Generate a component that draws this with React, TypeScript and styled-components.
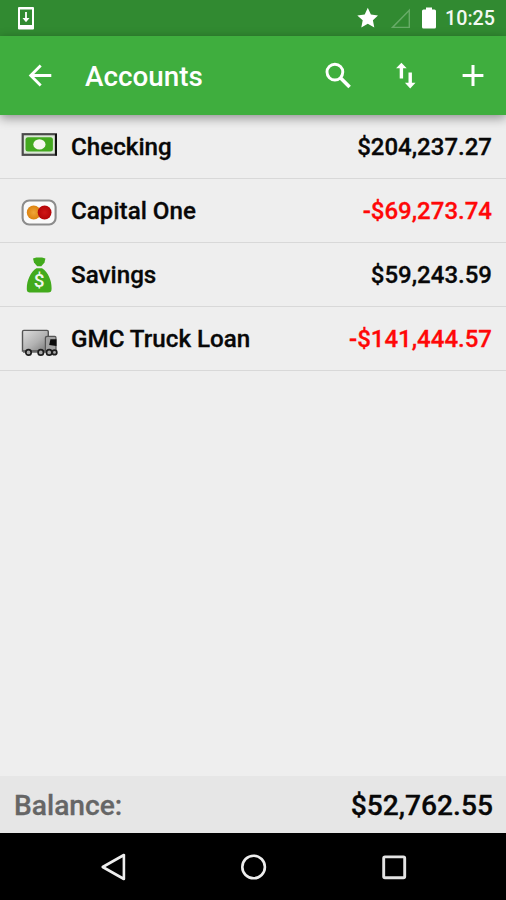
import React from 'react';
import styled, { createGlobalStyle } from 'styled-components';

const Global = createGlobalStyle`
  * { box-sizing: border-box; }
  body { margin: 0; background: #eee; font-family: Roboto, "Liberation Sans", sans-serif; }
  svg { display: block; flex: none; }
`;

const Screen = styled.div`
  width: 506px;
  height: 900px;
  display: flex;
  flex-direction: column;
  background: #eeeeee;
  overflow: hidden;
`;

const StatusBar = styled.div`
  height: 36px;
  flex: none;
  display: flex;
  align-items: center;
  justify-content: space-between;
  padding: 0 11px 0 17px;
  background: #318a31;
  color: #fff;
`;

const StatusIcons = styled.div`
  display: flex;
  align-items: center;
`;

const Clock = styled.span`
  margin-left: 9px;
  padding-top: 2px;
  font-size: 19.7px;
  line-height: 24px;
  font-weight: 500;
  color: #f3f9f3;
`;

const AppBar = styled.header`
  height: 79px;
  flex: none;
  display: flex;
  align-items: center;
  padding: 0 19px 0 26px;
  background: #3fae3e;
  color: #fff;
  box-shadow: 0 3px 10px rgba(0, 0, 0, 0.4);
  z-index: 1;
`;

const Title = styled.h1`
  margin: 0 0 0 31px;
  padding-top: 3px;
  flex: 1;
  font-size: 27.8px;
  line-height: 32px;
  font-weight: 500;
`;

const Actions = styled.div`
  display: flex;
  gap: 39px;
`;

const List = styled.ul`
  flex: 1;
  margin: 0;
  padding: 0;
  list-style: none;
`;

const Row = styled.li`
  height: 64px;
  display: flex;
  align-items: center;
  padding: 1px 14px 0 19px;
  border-bottom: 1px solid #d8d8d8;
`;

const Name = styled.span`
  flex: 1;
  margin-left: 12px;
  font-size: 24.2px;
  line-height: 28px;
  font-weight: 500;
  color: #080808;
  -webkit-text-stroke: 0.3px currentColor;
`;

const Amount = styled.span<{ $negative?: boolean }>`
  font-size: 24px;
  line-height: 28px;
  font-weight: 500;
  color: ${(p) => (p.$negative ? '#ff0808' : '#080808')};
  -webkit-text-stroke: 0.3px currentColor;
`;

const Footer = styled.footer`
  height: 57px;
  flex: none;
  display: flex;
  align-items: center;
  justify-content: space-between;
  padding: 3px 13px 0 14px;
  background: #e6e6e6;
  font-size: 28.2px;
  line-height: 32px;
  font-weight: 500;
  -webkit-text-stroke: 0.3px currentColor;
`;

const FooterLabel = styled.span`
  color: #666;
`;

const FooterTotal = styled.span`
  color: #080808;
`;

const NavBar = styled.nav`
  height: 67px;
  flex: none;
  display: flex;
  align-items: center;
  justify-content: center;
  gap: 100px;
  background: #000;
`;

const BillIcon = () => (
  <svg width="40" height="40" viewBox="0 0 40 40">
    <rect x="3.7" y="7.2" width="33.2" height="20.6" fill="#dce8d8" stroke="#4a4a4a" strokeWidth="2.2" />
    <path d="M37 7V28.5" fill="none" stroke="#111" strokeWidth="2" />
    <rect x="6.5" y="10.2" width="27.4" height="14.4" rx="2.5" fill="#43a91f" />
    <ellipse cx="20.4" cy="17.4" rx="6.1" ry="5.2" fill="#f6f6ee" />
  </svg>
);

const CardIcon = () => (
  <svg width="40" height="40" viewBox="0 0 40 40">
    <defs>
      <radialGradient id="orange">
        <stop offset="0" stopColor="#f0a638" />
        <stop offset="1" stopColor="#dc820f" />
      </radialGradient>
      <radialGradient id="crimson">
        <stop offset="0" stopColor="#cf1616" />
        <stop offset="1" stopColor="#b40508" />
      </radialGradient>
    </defs>
    <rect x="3.6" y="9.5" width="33" height="24" rx="6.5" fill="#fafafa" stroke="#8c8c8c" strokeWidth="2.1" />
    <circle cx="14.7" cy="21.5" r="6.9" fill="url(#orange)" />
    <circle cx="25.6" cy="21.5" r="6.9" fill="url(#crimson)" />
  </svg>
);

const Sack = styled.text`
  font: 500 19px Roboto, sans-serif;
  fill: #f1f7ed;
  text-anchor: middle;
`;

const BagIcon = () => (
  <svg width="40" height="40" viewBox="0 0 40 40">
    <path d="M14 3.4L17.3 2.5H23L26.4 3.4L25.5 7.4L22.3 11.3H18.2L15 7.4Z" fill="#42aa1c" />
    <path d="M17.4 13.2H23C28.9 17 32.8 25 32.6 33.5C32.6 36.5 31.6 37.5 29 37.5H11.5C8.6 37.5 7.8 36.5 7.8 33.5C7.8 25 11.7 17 17.4 13.2Z" fill="#42aa1c" />
    <Sack x="20.2" y="31.6">$</Sack>
  </svg>
);

const TruckIcon = () => (
  <svg width="40" height="40" viewBox="0 0 40 40">
    <defs>
      <linearGradient id="cargo" x1="0" y1="0" x2="1" y2="1">
        <stop offset="0" stopColor="#dedede" />
        <stop offset="0.55" stopColor="#b2b2b2" />
        <stop offset="1" stopColor="#777" />
      </linearGradient>
    </defs>
    <path d="M3.5 32V12.7Q3.5 11.4 4.8 11.4H28Q29.3 11.4 29.3 12.7V32Z" fill="url(#cargo)" stroke="#555" strokeWidth="1.4" />
    <path d="M26.4 32.5V19Q26.4 17.3 28.5 17.3H35.8Q37 17.3 37 18.8V32.5Z" fill="#a2a2a2" stroke="#555" strokeWidth="1.2" />
    <path d="M37.5 20.2H31.4L30.2 26L37.5 27Z" fill="#0b0b0b" />
    <path d="M4 32.8H37" stroke="#666" strokeWidth="2" />
    {[9.5, 21.8, 30.2, 35.5].map((x) => (
      <circle key={x} cx={x} cy="33.4" r={x > 35 ? 2.3 : 2.7} fill="#aaa" stroke="#1d1d1d" strokeWidth="1.7" />
    ))}
  </svg>
);

const accounts = [
  { name: 'Checking', amount: '$204,237.27', Icon: BillIcon },
  { name: 'Capital One', amount: '-$69,273.74', negative: true, Icon: CardIcon },
  { name: 'Savings', amount: '$59,243.59', Icon: BagIcon },
  { name: 'GMC Truck Loan', amount: '-$141,444.57', negative: true, Icon: TruckIcon },
];

export default function App() {
  return (
    <>
      <Global />
      <Screen>
        <StatusBar>
          <svg width="18" height="24" viewBox="0 0 18 24">
            <path fillRule="evenodd" fill="#fff" d="M2 1H16Q17 1 17 2V22.5Q17 23.5 16 23.5H2Q1 23.5 1 22.5V2Q1 1 2 1ZM3 3.5V19H15V3.5Z" />
            <path d="M9 6V14" stroke="#fff" strokeWidth="1.8" />
            <path d="M5.5 12H12.5L9 16.3Z" fill="#fff" />
          </svg>
          <StatusIcons>
            <svg width="22" height="22" viewBox="0 0 22 22">
              <path fill="#fff" d="M11.8 .8L14.9 7.4L22 8.4L16.9 13.2L18.3 20.5L11.8 16.8L5.3 20.5L6.7 13.2L1.3 8.4L8.7 7.4Z" />
            </svg>
            <svg width="44" height="24" viewBox="0 0 44 24">
              <path d="M14.5 21.4H31.3V4.3Z" fill="none" stroke="#67ab67" strokeWidth="1.4" />
            </svg>
            <svg width="14" height="22" viewBox="0 0 14 22">
              <path fill="#fff" d="M4 .5H10V2.5H12.5Q14 2.5 14 4V20Q14 21.5 12.5 21.5H1.5Q0 21.5 0 20V4Q0 2.5 1.5 2.5H4Z" />
            </svg>
            <Clock>10:25</Clock>
          </StatusIcons>
        </StatusBar>
        <AppBar>
          <svg width="28" height="28" viewBox="0 0 28 28" fill="none" stroke="#fff" strokeWidth="2.8">
            <path d="M25.3 13.5H5M14.7 3.5L4.7 13.5L14.7 23.5" />
          </svg>
          <Title>Accounts</Title>
          <Actions>
            <svg width="28" height="28" viewBox="0 0 28 28" fill="none" stroke="#fff">
              <circle cx="9.9" cy="10.1" r="7.9" strokeWidth="2.9" />
              <path d="M15.6 15.9L24.6 24.9" strokeWidth="3.6" />
            </svg>
            <svg width="28" height="28" viewBox="0 0 28 28" fill="#fff">
              <path d="M9.4 .7L14.7 6.3H11.1V16.5H7.7V6.3H4.1Z" />
              <path d="M18.2 26.4L23.5 20.8H19.9V10.6H16.5V20.8H12.9Z" />
            </svg>
            <svg width="28" height="28" viewBox="0 0 28 28" fill="none" stroke="#fff" strokeWidth="3">
              <path d="M3.6 13.5H24.4M14 3.1V23.9" />
            </svg>
          </Actions>
        </AppBar>
        <List>
          {accounts.map(({ name, amount, negative, Icon }) => (
            <Row key={name}>
              <Icon />
              <Name>{name}</Name>
              <Amount $negative={negative}>{amount}</Amount>
            </Row>
          ))}
        </List>
        <Footer>
          <FooterLabel>Balance:</FooterLabel>
          <FooterTotal>$52,762.55</FooterTotal>
        </Footer>
        <NavBar>
          <svg width="40" height="40" viewBox="0 0 40 40" fill="none" stroke="#eee" strokeWidth="2.6" strokeLinejoin="round">
            <path d="M30.9 8V32L9.7 20Z" />
          </svg>
          <svg width="40" height="40" viewBox="0 0 40 40" fill="none" stroke="#eee" strokeWidth="2.6">
            <circle cx="20.6" cy="20" r="11.3" />
          </svg>
          <svg width="40" height="40" viewBox="0 0 40 40" fill="none" stroke="#e4e4e4" strokeWidth="2.9">
            <rect x="10.7" y="9.9" width="21" height="20.8" rx="1.3" />
          </svg>
        </NavBar>
      </Screen>
    </>
  );
}
